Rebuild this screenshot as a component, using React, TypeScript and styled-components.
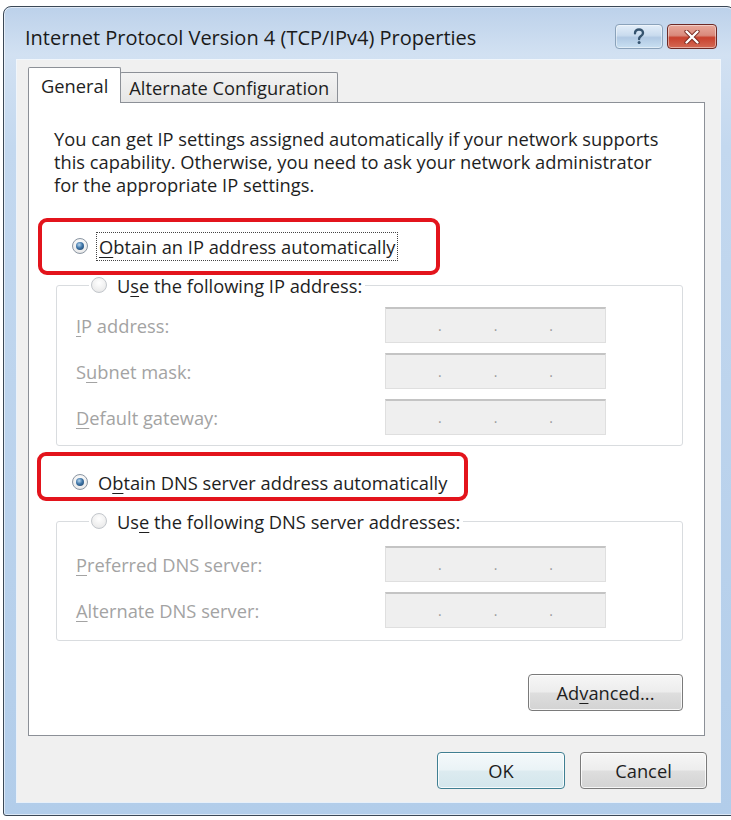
import styled, { createGlobalStyle } from 'styled-components';

const GlobalStyle = createGlobalStyle`
  html, body {
    margin: 0;
    background: #ffffff;
    overflow: hidden;
  }
  body {
    font-family: 'Open Sans', 'Noto Sans', sans-serif;
    color: #1b1b1b;
  }
`;

const Page = styled.div`
  width: 731px;
  height: 820px;
  padding: 6px 0 0 3px;
  box-sizing: border-box;
  overflow: hidden;
`;

const Window = styled.div`
  width: 732px;
  height: 810px;
  box-sizing: border-box;
  border: 1px solid #3b4856;
  border-radius: 8px 8px 3px 3px;
  background: linear-gradient(#bcd1ea 0, #d2e1f2 48px, #c3d8ef 140px, #b2cdea 100%);
  box-shadow: inset 0 0 0 1px rgba(255, 255, 255, 0.55);
  display: flex;
  flex-direction: column;
  padding: 0 14px 13px 13px;
`;

const TitleBar = styled.div`
  height: 53px;
  display: flex;
  align-items: flex-start;
  justify-content: space-between;
  padding: 0 3px 0 8px;
`;

const Title = styled.div`
  margin-top: 18px;
  font-size: 20px;
  line-height: 26px;
  color: #1a1a1a;
`;

const CaptionButtons = styled.div`
  display: flex;
  gap: 4px;
  margin-top: 17px;
`;

const CaptionButton = styled.div<{ $close?: boolean }>`
  width: ${p => (p.$close ? 50 : 48)}px;
  height: 25px;
  box-sizing: border-box;
  border-radius: 4px;
  display: grid;
  place-items: center;
  border: 1px solid ${p => (p.$close ? '#6d2a26' : '#8aa2ba')};
  background: ${p =>
    p.$close
      ? 'linear-gradient(#e9a99c 0, #d98a7c 45%, #c8412e 55%, #d46a55 100%)'
      : 'linear-gradient(#e3eef9 0, #c9dbee 45%, #b1c9e3 55%, #c9e0f2 100%)'};
  box-shadow: inset 0 0 0 1px rgba(255, 255, 255, 0.45);
`;

const Client = styled.div`
  flex: 1;
  background: #f0f0f0;
  box-shadow: 0 0 0 1px rgba(255, 255, 255, 0.7);
  display: flex;
  flex-direction: column;
  padding: 7px 15px 13px 11px;
`;

const TabStrip = styled.div`
  height: 35px;
  display: flex;
  align-items: flex-end;
`;

const Tab = styled.div<{ $active?: boolean }>`
  position: relative;
  z-index: ${p => (p.$active ? 1 : 0)};
  box-sizing: border-box;
  height: ${p => (p.$active ? 36 : 30)}px;
  margin-bottom: ${p => (p.$active ? -1 : 0)}px;
  margin-left: ${p => (p.$active ? 0 : -1)}px;
  padding: 0 ${p => (p.$active ? 12 : 8)}px;
  border: 1px solid #8c9097;
  border-bottom: none;
  border-radius: 2px 2px 0 0;
  background: ${p => (p.$active ? '#ffffff' : 'linear-gradient(#f3f3f3, #e6e6e6)')};
  display: flex;
  align-items: center;
  font-size: 18.3px;
  color: #1e1e1e;
`;

const Panel = styled.div`
  flex: 1;
  background: #ffffff;
  border: 1px solid #8c9097;
  display: flex;
  flex-direction: column;
  padding: 24px 21px 0 25px;
`;

const Intro = styled.p`
  margin: 0;
  font-size: 18.3px;
  line-height: 23px;
  color: #1e1e1e;
`;

const RadioRow = styled.div<{ $gap: number }>`
  position: relative;
  display: flex;
  align-items: center;
  gap: 10px;
  height: 22px;
  margin: ${p => p.$gap}px 0 0 18px;
  font-size: 18.3px;
  color: #1e1e1e;
`;

/* red annotation frame laid over a radio row */
const Highlight = styled.div<{ $left: number; $top: number; $w: number; $h: number }>`
  position: absolute;
  left: ${p => p.$left}px;
  top: ${p => p.$top}px;
  width: ${p => p.$w}px;
  height: ${p => p.$h}px;
  box-sizing: border-box;
  border: 4px solid #e3141c;
  border-radius: 9px;
  pointer-events: none;
`;

const Radio = styled.span<{ $checked?: boolean }>`
  flex: none;
  width: 16px;
  height: 16px;
  box-sizing: border-box;
  border-radius: 50%;
  border: 1px solid ${p => (p.$checked ? '#8b96a3' : '#c3c7cc')};
  background: radial-gradient(circle at 50% 35%, #ffffff 0, #ececec 70%, #d8dadd 100%);
  display: grid;
  place-items: center;

  &::after {
    content: '';
    display: ${p => (p.$checked ? 'block' : 'none')};
    width: 8px;
    height: 8px;
    border-radius: 50%;
    background: radial-gradient(circle at 40% 35%, #b8d6ee 0, #3f76a8 45%, #1a3a5e 100%);
  }
`;

const Focused = styled.span`
  outline: 1px dotted #444;
  outline-offset: 1px;
  padding: 0 1px;
`;

const Group = styled.fieldset<{ $gap: number; $padTop: number; $padBottom: number }>`
  margin: ${p => p.$gap}px 0 0 2px;
  padding: ${p => p.$padTop}px 20px ${p => p.$padBottom}px 19px;
  border: 1px solid #d9dcdf;
  border-radius: 3px;
  display: flex;
  flex-direction: column;
  gap: 10px;
  min-width: 0;
`;

const GroupLegend = styled.legend`
  margin-left: 13px;
  padding: 0 3px 0 2px;
  display: flex;
  align-items: center;
  gap: 10px;
  height: 22px;
  font-size: 18.3px;
  color: #1e1e1e;
`;

const FieldRow = styled.div`
  display: grid;
  grid-template-columns: 309px 221px;
  align-items: center;
`;

const FieldLabel = styled.span`
  font-size: 18.3px;
  color: #a3a3a3;
`;

const AddressBox = styled.div`
  height: 36px;
  box-sizing: border-box;
  background: #efefef;
  border: 1px solid #dfdfdf;
  border-top: 2px solid #c4c4c4;
  display: flex;
  justify-content: space-evenly;
  align-items: center;
  color: #9a9a9a;
  font-size: 14px;
  line-height: 1;
`;

const Button = styled.button<{ $default?: boolean; $width: number }>`
  width: ${p => p.$width}px;
  height: 37px;
  box-sizing: border-box;
  border-radius: 4px;
  border: 1px solid ${p => (p.$default ? '#3f7f92' : '#7a7a7a')};
  background: ${p =>
    p.$default
      ? 'linear-gradient(#f4f9fb 0, #eaf3f6 48%, #dcebf0 52%, #d3e6ec 100%)'
      : 'linear-gradient(#f6f6f6 0, #ededed 48%, #dedede 52%, #d3d3d3 100%)'};
  box-shadow: inset 0 0 0 1px rgba(255, 255, 255, 0.8);
  font-family: inherit;
  font-size: 18.3px;
  color: #1e1e1e;
  padding: 0;
`;

const AdvancedRow = styled.div`
  display: flex;
  justify-content: flex-end;
  margin-top: 33px;
`;

const Footer = styled.div`
  display: flex;
  justify-content: flex-end;
  gap: 15px;
  margin: 16px -2px 0 0;
`;

const Key = styled.u`
  text-decoration-thickness: 1px;
  text-underline-offset: 3px;
`;

function AddressField({ label }: { label: React.ReactNode }) {
  return (
    <FieldRow>
      <FieldLabel>{label}</FieldLabel>
      <AddressBox>
        <span>.</span>
        <span>.</span>
        <span>.</span>
      </AddressBox>
    </FieldRow>
  );
}

function HelpGlyph() {
  return (
    <svg width="14" height="17" viewBox="0 0 14 17">
      <path
        d="M3 5.2 C3 2.8 4.8 1.5 7 1.5 C9.3 1.5 11 2.9 11 5 C11 7 9.6 7.7 8.4 8.5 C7.5 9.1 7.1 9.7 7.1 11"
        fill="none"
        stroke="#36546f"
        strokeWidth="2.4"
        strokeLinecap="round"
      />
      <circle cx="7.1" cy="14.5" r="1.5" fill="#36546f" />
    </svg>
  );
}

function CloseGlyph() {
  return (
    <svg width="16" height="14" viewBox="0 0 16 14">
      <path d="M2.5 1.5 L13.5 12.5 M13.5 1.5 L2.5 12.5" stroke="#7a2a22" strokeWidth="4.2" strokeLinecap="round" />
      <path d="M2.5 1.5 L13.5 12.5 M13.5 1.5 L2.5 12.5" stroke="#ffffff" strokeWidth="2.4" strokeLinecap="round" />
    </svg>
  );
}

export default function App() {
  return (
    <Page>
      <GlobalStyle />
      <Window>
        <TitleBar>
          <Title>Internet Protocol Version 4 (TCP/IPv4) Properties</Title>
          <CaptionButtons>
            <CaptionButton>
              <HelpGlyph />
            </CaptionButton>
            <CaptionButton $close>
              <CloseGlyph />
            </CaptionButton>
          </CaptionButtons>
        </TitleBar>

        <Client>
          <TabStrip>
            <Tab $active>General</Tab>
            <Tab>Alternate Configuration</Tab>
          </TabStrip>

          <Panel>
            <Intro>
              You can get IP settings assigned automatically if your network supports
              <br />
              this capability. Otherwise, you need to ask your network administrator
              <br />
              for the appropriate IP settings.
            </Intro>

            <RadioRow $gap={39}>
              <Radio $checked />
              <Focused>
                <Key>O</Key>btain an IP address automatically
              </Focused>
              <Highlight $left={-34} $top={-17} $w={402} $h={57} />
            </RadioRow>

            <Group $gap={17} $padTop={11} $padBottom={10}>
              <GroupLegend>
                <Radio />
                <span>
                  U<Key>s</Key>e the following IP address:
                </span>
              </GroupLegend>
              <AddressField label={<><Key>I</Key>P address:</>} />
              <AddressField label={<>S<Key>u</Key>bnet mask:</>} />
              <AddressField label={<><Key>D</Key>efault gateway:</>} />
            </Group>

            <RadioRow $gap={25}>
              <Radio $checked />
              <span>
                O<Key>b</Key>tain DNS server address automatically
              </span>
              <Highlight $left={-35} $top={-19} $w={431} $h={49} />
            </RadioRow>

            <Group $gap={17} $padTop={14} $padBottom={12}>
              <GroupLegend>
                <Radio />
                <span>
                  Us<Key>e</Key> the following DNS server addresses:
                </span>
              </GroupLegend>
              <AddressField label={<><Key>P</Key>referred DNS server:</>} />
              <AddressField label={<><Key>A</Key>lternate DNS server:</>} />
            </Group>

            <AdvancedRow>
              <Button $width={155}>
                Ad<Key>v</Key>anced...
              </Button>
            </AdvancedRow>
          </Panel>

          <Footer>
            <Button $default $width={128}>
              OK
            </Button>
            <Button $width={127}>Cancel</Button>
          </Footer>
        </Client>
      </Window>
    </Page>
  );
}
